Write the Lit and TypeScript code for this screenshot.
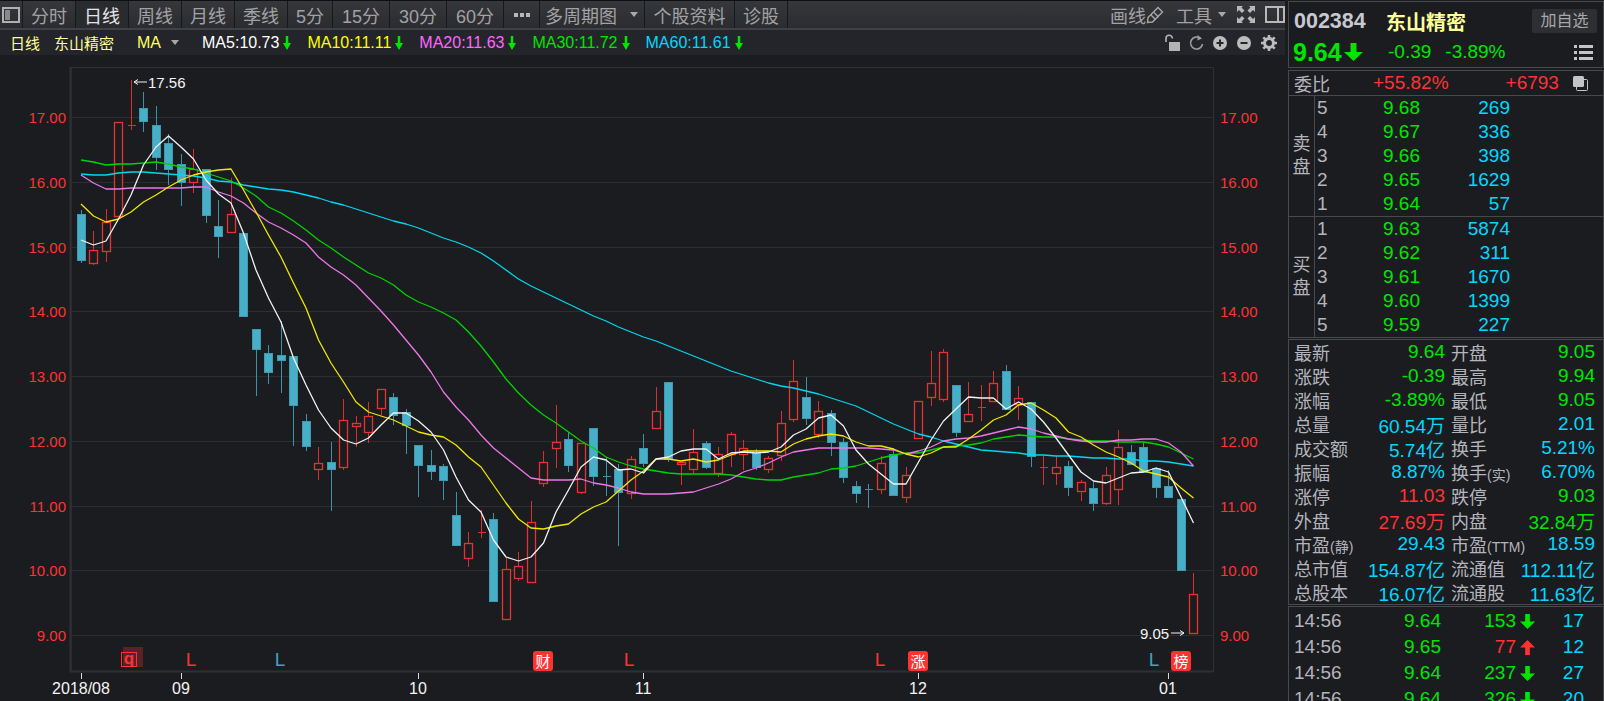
import { LitElement, html, css, svg } from 'lit';
import { customElement } from 'lit/decorators.js';

const UP = '#ff3232';
const DOWN = '#00e600';
const CYAN = '#00d8ff';

// [up, body top, body bottom, wick top, wick bottom], all in page pixels
const CANDLES: number[][] = [
  [0,214,260,210,263],[1,250,263,231,265],[1,222,251,209,262],[1,122,216,122,216],[1,125,125,80,130],
  [0,108,121,92,132],[0,125,157,106,170],[0,143,169,134,185],[0,164,182,154,206],[1,169,182,149,193],
  [0,169,215,169,223],[0,226,236,200,258],[1,214,232,178,233],[0,233,316,233,316],[0,329,349,329,396],
  [0,353,372,345,384],[0,355,360,321,393],[0,356,405,356,446],[0,421,446,414,451],[1,463,469,447,480],
  [0,462,469,442,511],[1,420,467,399,470],[1,423,426,416,447],[1,416,432,402,443],[1,389,408,389,415],
  [0,397,415,393,425],[0,412,425,409,454],[0,445,465,445,497],[0,465,471,450,480],[0,466,480,464,500],
  [0,515,545,492,546],[1,543,558,532,567],[1,532,532,510,538],[0,519,601,513,601],[1,569,619,558,619],
  [1,566,578,552,581],[1,522,582,501,582],[1,462,483,451,487],[1,442,448,405,468],[0,439,465,432,472],
  [1,443,492,443,494],[0,428,476,428,486],[0,476,476,457,496],[0,469,492,464,546],[1,459,493,456,499],
  [0,448,463,434,467],[1,411,428,387,428],[0,382,459,382,462],[1,462,464,462,485],[1,452,469,429,473],
  [0,443,467,441,469],[1,454,473,447,477],[1,434,454,432,467],[1,448,454,440,470],[0,453,467,449,470],
  [1,458,469,456,473],[1,423,455,411,461],[1,381,419,360,422],[0,397,418,377,425],[1,411,434,401,438],
  [0,413,442,410,456],[0,442,477,438,483],[0,486,493,481,503],[0,489,489,484,508],[1,463,489,456,494],
  [0,454,495,448,496],[1,475,497,467,503],[1,401,438,401,438],[1,383,397,351,406],[1,352,399,349,402],
  [0,385,432,385,437],[1,414,421,382,421],[1,407,407,385,421],[1,383,401,371,401],[0,371,409,365,409],
  [1,398,404,386,420],[0,402,456,402,467],[1,467,467,456,485],[1,467,473,456,485],[0,466,487,461,496],
  [1,482,491,480,501],[0,488,503,482,511],[1,475,503,467,505],[1,447,489,430,505],[0,452,464,445,464],
  [0,447,472,442,472],[0,468,487,467,498],[0,486,497,470,497],[0,499,570,499,570],[1,594,633,573,633],
];

const MA_LINES: { color: string; ys: number[] }[] = [
  { color: '#00d8f0', ys: [174,175,175,173,172,172,173,174,175,176,178,181,182,185,187,189,190,192,195,198,202,205,209,213,217,221,224,228,233,238,242,247,253,261,270,279,286,292,298,304,310,316,321,327,332,337,341,346,351,356,361,366,371,375,379,383,386,388,391,394,398,402,406,412,418,424,429,434,437,441,444,447,450,451,452,453,455,455,456,456,457,458,458,459,459,461,461,462,464,466] },
  { color: '#00d400', ys: [160,162,165,164,164,163,162,164,167,169,173,177,181,188,196,207,213,221,230,240,248,257,265,273,278,285,295,302,307,313,320,332,346,362,379,393,405,415,423,432,441,448,457,462,466,469,471,473,474,474,474,474,475,477,479,480,480,477,475,473,469,468,466,462,458,455,453,453,450,447,446,445,443,439,437,435,436,437,437,439,440,441,441,442,442,442,444,447,453,459] },
  { color: '#ee77e8', ys: [175,183,189,189,188,188,188,188,188,187,187,192,196,203,213,222,228,235,243,257,267,275,285,298,311,325,340,355,372,392,407,420,435,448,458,468,478,480,480,480,479,483,485,488,492,494,494,494,493,492,488,484,479,472,468,463,457,452,450,448,448,448,448,448,449,450,454,451,447,441,439,438,436,433,430,427,429,433,436,439,441,442,442,440,440,439,439,443,452,466] },
  { color: '#f0e800', ys: [204,216,222,219,212,202,195,187,180,175,172,170,169,190,212,235,257,283,308,340,363,382,402,412,416,420,426,432,435,437,445,457,467,485,503,519,528,529,526,524,514,507,502,491,480,471,459,459,461,459,462,460,455,451,451,451,452,444,439,436,434,436,442,446,446,449,454,457,453,447,447,439,430,420,415,405,403,410,418,432,437,445,452,457,463,471,474,477,488,498] },
  { color: '#f2f2f2', ys: [240,245,241,219,195,165,147,136,147,159,180,194,203,233,270,298,322,358,385,410,428,440,444,438,425,413,413,421,432,450,477,500,512,540,557,561,557,543,512,490,467,457,460,470,469,473,459,457,451,449,449,459,453,452,453,452,447,435,429,418,415,426,450,464,474,484,484,462,440,421,409,397,398,398,409,402,409,422,438,455,472,481,483,478,473,472,468,472,497,523] },
];

const cx = (i: number) => Math.floor(81 + 12.5 * i) + 0.5;

@customElement('kline-chart')
export class KlineChart extends LitElement {
  static styles = css`
    :host { display: block; flex: 1; }
    svg { display: block; }
    text { font-family: "Liberation Sans", "Noto Sans CJK SC", sans-serif; }
    .price { font-size: 15px; fill: #ff3232; dominant-baseline: central; }
    .date { font-size: 16px; fill: #f4f4f4; text-anchor: middle; dominant-baseline: central; }
    .mark { font-size: 19px; dominant-baseline: central; text-anchor: middle; }
    .badge { font-size: 15px; fill: #fff; dominant-baseline: central; text-anchor: middle; }
    .extreme { font-size: 15px; fill: #f4f4f4; dominant-baseline: central; }
  `;

  private candle(c: number[], i: number) {
    const [up, top, bot, wt, wb] = c;
    const x = cx(i);
    const wick = up ? '#d9302e' : '#3b93a9';
    const wickLine = svg`<line x1=${x} x2=${x} y1=${wt} y2=${wb} stroke=${wick} stroke-width="1.2" shape-rendering="crispEdges"></line>`;
    if (top === bot) {
      return svg`${wickLine}<line x1=${x - 4} x2=${x + 4.5} y1=${top + 0.5} y2=${top + 0.5} stroke=${wick} shape-rendering="crispEdges"></line>`;
    }
    return up
      ? svg`${wickLine}<rect x=${x - 4} y=${top + 0.5} width="8" height=${bot - top} fill="#1b1c20" stroke="#e8322f" stroke-width="1.3"></rect>`
      : svg`${wickLine}<rect x=${x - 4} y=${top + 0.5} width="8" height=${bot - top} fill="#48afc8" stroke="#3f9ab1"></rect>`;
  }

  render() {
    const prices = [17, 16, 15, 14, 13, 12, 11, 10, 9];
    const gy = (p: number) => Math.round(635 - (p - 9) * 64.75) + 0.5;
    const dates: [number, string][] = [[81, '2018/08'], [181, '09'], [418, '10'], [643, '11'], [918, '12'], [1168, '01']];
    const letters: [number, string][] = [[191, UP], [280, '#3fa5bd'], [629, UP], [880, UP], [1154, '#3fa5bd']];
    const badges: [number, string][] = [[543, '财'], [918, '涨'], [1181, '榜']];
    return html`
      <svg width="1286" height="646" viewBox="0 55 1286 646">
        ${prices.map((p) => svg`
          <line x1="71" x2="1213" y1=${gy(p)} y2=${gy(p)} stroke="#2d2e32" stroke-width="1.2"></line>
          <text class="price" x="66" y=${gy(p)} text-anchor="end">${p.toFixed(2)}</text>
          <text class="price" x="1220" y=${gy(p)}>${p.toFixed(2)}</text>`)}
        <path d="M71 671.5V67.5H1213.5V671.5Z" fill="none" stroke="#2f3034"></path>
        <line x1="70" x2="1213" y1="671.5" y2="671.5" stroke="#2f3034" stroke-width="2"></line>
        <line x1="70.5" x2="70.5" y1="67" y2="672" stroke="#2f3034" stroke-width="2"></line>
        ${dates.map(([x, t]) => svg`
          <line x1=${x + 0.5} x2=${x + 0.5} y1="673" y2="679" stroke="#d8d8d8"></line>
          <text class="date" x=${x} y="688">${t}</text>`)}
        ${CANDLES.map((c, i) => this.candle(c, i))}
        ${MA_LINES.map((l) => svg`
          <polyline fill="none" stroke=${l.color} stroke-width="1.3" stroke-linejoin="round"
            points=${l.ys.map((y, i) => `${81 + 12.5 * i},${y}`).join(' ')}></polyline>`)}
        <path d="M147 82H134M138 79.5L134 82L138 84.5" fill="none" stroke="#f4f4f4"></path>
        <text class="extreme" x="148" y="82">17.56</text>
        <text class="extreme" x="1140" y="633">9.05</text>
        <path d="M1171 633H1184M1180 630.5L1184 633L1180 635.5" fill="none" stroke="#f4f4f4"></path>
        <rect x="123" y="647" width="20" height="20" fill="#5a2226"></rect>
        <rect x="121.5" y="652.5" width="15" height="14" fill="none" stroke="#ff3232"></rect>
        <text class="mark" x="129" y="658" fill="#ff3232" style="font-weight:700;font-size:17px">q</text>
        ${letters.map(([x, c]) => svg`<text class="mark" x=${x} y="659" fill=${c}>L</text>`)}
        ${badges.map(([x, t]) => svg`
          <rect x=${x - 10} y="651" width="20" height="20" rx="3" fill="#ff3232"></rect>
          <text class="badge" x=${x} y="661">${t}</text>`)}
      </svg>
    `;
  }
}

const arrow = (color: string, dir: 'up' | 'down', w: number, h: number) => html`
  <svg width=${w} height=${h} viewBox="0 0 16 20" preserveAspectRatio="none" style="display:block;flex:none">
    <path fill=${color} transform=${dir === 'up' ? 'rotate(180 8 10)' : ''} d="M5.5 0H10.5V10H16L8 20L0 10H5.5Z"></path>
  </svg>`;

const PAGE_FONT = css`"Liberation Sans", "Noto Sans CJK SC", sans-serif`;

@customElement('quote-panel')
export class QuotePanel extends LitElement {
  static styles = css`
    :host {
      display: flex; flex-direction: column; width: 316px; height: 701px; overflow: hidden;
      padding-top: 1px; box-sizing: border-box;
      font-family: ${PAGE_FONT}; color: #b4b4bc; font-size: 18px; background: #1b1c20;
    }
    .box { border: 1px solid #48494d; box-sizing: border-box; flex: none; }
    .head { height: 67px; margin-bottom: 2px; padding: 0 6px 0 5px; }
    .head-top { display: flex; align-items: center; height: 38px; }
    .code { font-size: 21.5px; font-weight: 700; color: #c8c8d0; width: 92px; }
    .name { font-size: 20px; font-weight: 700; color: #ffff99; }
    .fav { margin-left: auto; width: 65px; height: 24px; line-height: 24px; text-align: center; background: #2e2f33; border-radius: 2px; font-size: 16px; color: #a8a8a8; }
    .head-sub { display: flex; align-items: center; height: 24px; color: #00e600; }
    .last { font-size: 25px; font-weight: 700; margin-left: -1px; width: 51px; }
    .chg { font-size: 19px; margin-left: 25px; }
    .pct { font-size: 19px; margin-left: 14px; }
    .menu { margin-left: auto; margin-right: 4px; }

    .book { height: 268px; margin-bottom: 1px; }
    .ratio { display: flex; align-items: center; height: 24px; padding-left: 5px; border-bottom: 1px solid #48494d; box-sizing: content-box; }
    .ratio span { font-size: 19px; color: #ff3232; }
    .ratio .label { font-size: 18px; color: #b4b4bc; width: 79px; }
    .ratio .val2 { margin-left: 57px; width: 67px; }
    .side { display: flex; height: 120px; }
    .side.sell { border-bottom: 1px solid #48494d; box-sizing: content-box; }
    .side-title { width: 25px; border-right: 1px solid #48494d; display: flex; flex-direction: column; justify-content: center; align-items: center; font-size: 18px; line-height: 23px; }
    .levels { flex: 1; }
    .level { display: grid; grid-template-columns: 66px 40px 87px; height: 24px; line-height: 24px; font-size: 19px; padding-left: 2px; }
    .level .p { color: #00e600; }
    .level .q { color: #00d8ff; text-align: right; }

    .info { height: 266px; margin-bottom: 1px; padding-left: 5px; display: grid; grid-template-columns: 151px 144px; column-gap: 6px; grid-auto-rows: 24px; }
    .cell { display: flex; justify-content: space-between; align-items: center; white-space: nowrap; }
    .cell b { font-weight: 400; font-size: 19px; }
    .cell small { font-size: 14px; }

    .ticks { flex: 1; padding: 1px 0 0 5px; }
    .tick { display: grid; grid-template-columns: 110px 50px 62px 19px 49px; height: 26px; align-items: center; font-size: 19px; }
    .tick .qty { text-align: right; }
    .tick .cnt { color: #00d8ff; text-align: right; }
    .tick svg { margin-left: 4px; }
  `;

  private renderLevels(rows: [string, string, string][]) {
    return rows.map(([n, p, q]) => html`<div class="level"><span>${n}</span><span class="p">${p}</span><span class="q">${q}</span></div>`);
  }

  render() {
    const info: [unknown, string, string, unknown, string, string][] = [
      ['最新', '9.64', DOWN, '开盘', '9.05', DOWN],
      ['涨跌', '-0.39', DOWN, '最高', '9.94', DOWN],
      ['涨幅', '-3.89%', DOWN, '最低', '9.05', DOWN],
      ['总量', '60.54万', CYAN, '量比', '2.01', CYAN],
      ['成交额', '5.74亿', CYAN, '换手', '5.21%', CYAN],
      ['振幅', '8.87%', CYAN, html`换手<small>(实)</small>`, '6.70%', CYAN],
      ['涨停', '11.03', UP, '跌停', '9.03', DOWN],
      ['外盘', '27.69万', UP, '内盘', '32.84万', DOWN],
      [html`市盈<small>(静)</small>`, '29.43', CYAN, html`市盈<small>(TTM)</small>`, '18.59', CYAN],
      ['总市值', '154.87亿', CYAN, '流通值', '112.11亿', CYAN],
      ['总股本', '16.07亿', CYAN, '流通股', '11.63亿', CYAN],
    ];
    const ticks: [string, string, number, 'up' | 'down', string][] = [
      ['9.64', '153', 0, 'down', '17'],
      ['9.65', '77', 1, 'up', '12'],
      ['9.64', '237', 0, 'down', '27'],
      ['9.64', '326', 0, 'down', '20'],
    ];
    return html`
      <div class="box head">
        <div class="head-top">
          <span class="code">002384</span>
          <span class="name">东山精密</span>
          <span class="fav">加自选</span>
        </div>
        <div class="head-sub">
          <span class="last">9.64</span>
          ${arrow(DOWN, 'down', 19, 18)}
          <span class="chg">-0.39</span>
          <span class="pct">-3.89%</span>
          <svg class="menu" width="19" height="15" viewBox="0 0 19 15" fill="#c4c4c8">
            <rect y="0" width="3" height="3"></rect><rect x="5" y="0" width="14" height="3"></rect>
            <rect y="6" width="3" height="3"></rect><rect x="5" y="6" width="14" height="3"></rect>
            <rect y="12" width="3" height="3"></rect><rect x="5" y="12" width="14" height="3"></rect>
          </svg>
        </div>
      </div>
      <div class="box book">
        <div class="ratio">
          <span class="label">委比</span>
          <span>+55.82%</span>
          <span class="val2">+6793</span>
          <svg width="15" height="15" viewBox="0 0 15 15">
            <rect x="3.5" y="3.5" width="11" height="11" rx="1" fill="#1b1c20" stroke="#c4c4c8"></rect>
            <rect x="0" y="0" width="11" height="11" rx="1.5" fill="#c4c4c8"></rect>
          </svg>
        </div>
        <div class="side sell">
          <div class="side-title"><span>卖</span><span>盘</span></div>
          <div class="levels">${this.renderLevels([['5', '9.68', '269'], ['4', '9.67', '336'], ['3', '9.66', '398'], ['2', '9.65', '1629'], ['1', '9.64', '57']])}</div>
        </div>
        <div class="side">
          <div class="side-title"><span>买</span><span>盘</span></div>
          <div class="levels">${this.renderLevels([['1', '9.63', '5874'], ['2', '9.62', '311'], ['3', '9.61', '1670'], ['4', '9.60', '1399'], ['5', '9.59', '227']])}</div>
        </div>
      </div>
      <div class="box info">
        ${info.map(([a, b, c, d, e, f]) => html`
          <div class="cell"><span>${a}</span><b style="color:${c}">${b}</b></div>
          <div class="cell"><span>${d}</span><b style="color:${f}">${e}</b></div>`)}
      </div>
      <div class="box ticks">
        ${ticks.map(([p, q, up, dir, n]) => html`
          <div class="tick">
            <span>14:56</span>
            <span style="color:${DOWN}">${p}</span>
            <span class="qty" style="color:${up ? UP : DOWN}">${q}</span>
            ${arrow(up ? UP : DOWN, dir, 15, 15)}
            <span class="cnt">${n}</span>
          </div>`)}
      </div>
    `;
  }
}

@customElement('app-root')
export class AppRoot extends LitElement {
  static styles = css`
    :host {
      display: flex; width: 1604px; height: 701px; overflow: hidden; background: #1b1c20;
      font-family: ${PAGE_FONT};
    }
    .main { width: 1288px; flex: none; display: flex; flex-direction: column; }
    .toolbar {
      display: flex; align-items: stretch; height: 30px; box-sizing: border-box; width: 1285px;
      border-top: 1px solid #0f0f11; border-bottom: 2px solid #404145;
      background: linear-gradient(#36373b, #2b2c30); color: #a2a2a4; font-size: 18px;
    }
    .layout-btn { width: 23px; display: flex; align-items: center; justify-content: center; border-right: 1px solid #17181a; box-sizing: border-box; }
    .tab { display: flex; align-items: center; justify-content: center; padding: 0 8px; min-width: 53px; box-sizing: border-box; border-right: 1px solid #17181a; white-space: nowrap; }
    .tab.on { background: #2a2b2f; color: #e4e4e4; }
    .tab.short { min-width: 45px; }
    .tab.mid { min-width: 57px; }
    .tab.dots { min-width: 36px; padding: 0; gap: 2px; }
    .tab.dots i { width: 4px; height: 4px; background: #b8b8b8; }
    .tab.multi { width: 105px; gap: 13px; padding: 0 0 0 5px; justify-content: flex-start; }
    .tab.wide { width: 90px; }
    .tools { margin-left: auto; display: flex; align-items: center; }
    .tri { width: 0; height: 0; border-left: 4.5px solid transparent; border-right: 4.5px solid transparent; border-top: 5px solid #a8a8a8; flex: none; }
    .tool-draw { margin-right: 12px; }
    .tool-expand { margin: 0 10px 0 11px; }

    .ma-row { display: flex; align-items: center; height: 25px; width: 1285px; background: #24252a; font-size: 16px; white-space: nowrap; color: #ffff99; padding-left: 10px; box-sizing: border-box; }
    .ma-row .zh { font-size: 15px; }
    .ma-name { margin-left: 14px; }
    .ma-type { margin-left: 23px; color: #ffff66; margin-right: 8px; width: 26px; }
    .ma-row .tri { margin-right: 23px; }
    .ma-item { display: flex; align-items: center; gap: 4px; margin-right: 16px; }
    .ma-icons { margin-left: auto; margin-right: 8px; display: flex; align-items: center; gap: 9px; }
    .chart { flex: 1; }
  `;

  render() {
    const mas: [string, string][] = [
      ['MA5:10.73', '#ffffff'], ['MA10:11.11', '#ffff00'], ['MA20:11.63', '#ff66ff'],
      ['MA30:11.72', '#00e600'], ['MA60:11.61', '#00d8ff'],
    ];
    return html`
      <div class="main">
        <div class="toolbar">
          <div class="layout-btn">
            <svg width="18" height="16" viewBox="0 0 18 16"><rect x="1" y="1" width="16" height="14" fill="none" stroke="#b0b0b0" stroke-width="2"></rect><rect x="3" y="3" width="5" height="10" fill="#8a8a8a"></rect></svg>
          </div>
          <div class="tab">分时</div>
          <div class="tab on">日线</div>
          <div class="tab">周线</div>
          <div class="tab">月线</div>
          <div class="tab">季线</div>
          <div class="tab short">5分</div>
          <div class="tab mid">15分</div>
          <div class="tab mid">30分</div>
          <div class="tab mid">60分</div>
          <div class="tab dots"><i></i><i></i><i></i></div>
          <div class="tab multi">多周期图<span class="tri"></span></div>
          <div class="tab wide">个股资料</div>
          <div class="tab">诊股</div>
          <div class="tools">
            <span>画线</span>
            <svg class="tool-draw" width="18" height="18" viewBox="0 0 18 18" fill="none" stroke="#a8a8a8" stroke-width="1.4">
              <path d="M12 1.5L16.5 6L6.5 16L1.5 16.5L2 11.5Z"></path><path d="M5 9L9.5 13.5M8 6.5L12.5 11"></path>
            </svg>
            <span>工具</span>
            <span class="tri" style="margin-left:6px"></span>
            <svg class="tool-expand" width="18" height="17" viewBox="0 0 18 17" fill="#b8b8b8">
              <path d="M0 0H6L4.5 1.6L7.5 4.5L5 7L2 4L0 6ZM18 0H12L13.5 1.6L10.5 4.5L13 7L16 4L18 6ZM0 17H6L4.5 15.4L7.5 12.5L5 10L2 13L0 11ZM18 17H12L13.5 15.4L10.5 12.5L13 10L16 13L18 11Z"></path>
            </svg>
            <svg width="20" height="17" viewBox="0 0 20 17" fill="none" stroke="#b8b8b8" stroke-width="2">
              <rect x="1" y="1" width="18" height="15"></rect><path d="M13 1V16"></path>
            </svg>
          </div>
        </div>
        <div class="ma-row">
          <span class="zh">日线</span>
          <span class="zh ma-name">东山精密</span>
          <span class="ma-type">MA</span>
          <span class="tri"></span>
          ${mas.map(([t, c]) => html`<span class="ma-item" style="color:${c}">${t}${arrow('#00e600', 'down', 8, 14)}</span>`)}
          <span class="ma-icons">
            <svg width="16" height="17" viewBox="0 0 16 17" fill="#b4b4b4"><rect x="5" y="8" width="11" height="9"></rect><path d="M2 8V4.5a3.2 3.2 0 0 1 6.4 0" fill="none" stroke="#b4b4b4" stroke-width="1.6"></path></svg>
            <svg width="15" height="16" viewBox="0 0 15 16" fill="none" stroke="#9c9c9c" stroke-width="1.6"><path d="M11.5 3.5A6 6 0 1 0 13.5 9"></path><path d="M8.5 0L13 3.5L8.5 5.5Z" fill="#9c9c9c" stroke="none"></path></svg>
            <svg width="14" height="14" viewBox="0 0 14 14"><circle cx="7" cy="7" r="7" fill="#bcbcbc"></circle><path d="M3.5 7H10.5M7 3.5V10.5" stroke="#24252a" stroke-width="2"></path></svg>
            <svg width="14" height="14" viewBox="0 0 14 14" style="margin-left:1px"><circle cx="7" cy="7" r="7" fill="#bcbcbc"></circle><path d="M3.5 7H10.5" stroke="#24252a" stroke-width="2"></path></svg>
            <svg width="16" height="16" viewBox="0 0 16 16" style="margin-left:1px"><circle cx="8" cy="8" r="4.5" fill="none" stroke="#bcbcbc" stroke-width="3"></circle><path d="M8 0V3M8 13V16M0 8H3M13 8H16M2.3 2.3L4.4 4.4M11.6 11.6L13.7 13.7M13.7 2.3L11.6 4.4M4.4 11.6L2.3 13.7" stroke="#bcbcbc" stroke-width="2.6"></path></svg>
          </span>
        </div>
        <kline-chart class="chart"></kline-chart>
      </div>
      <quote-panel></quote-panel>
    `;
  }
}
